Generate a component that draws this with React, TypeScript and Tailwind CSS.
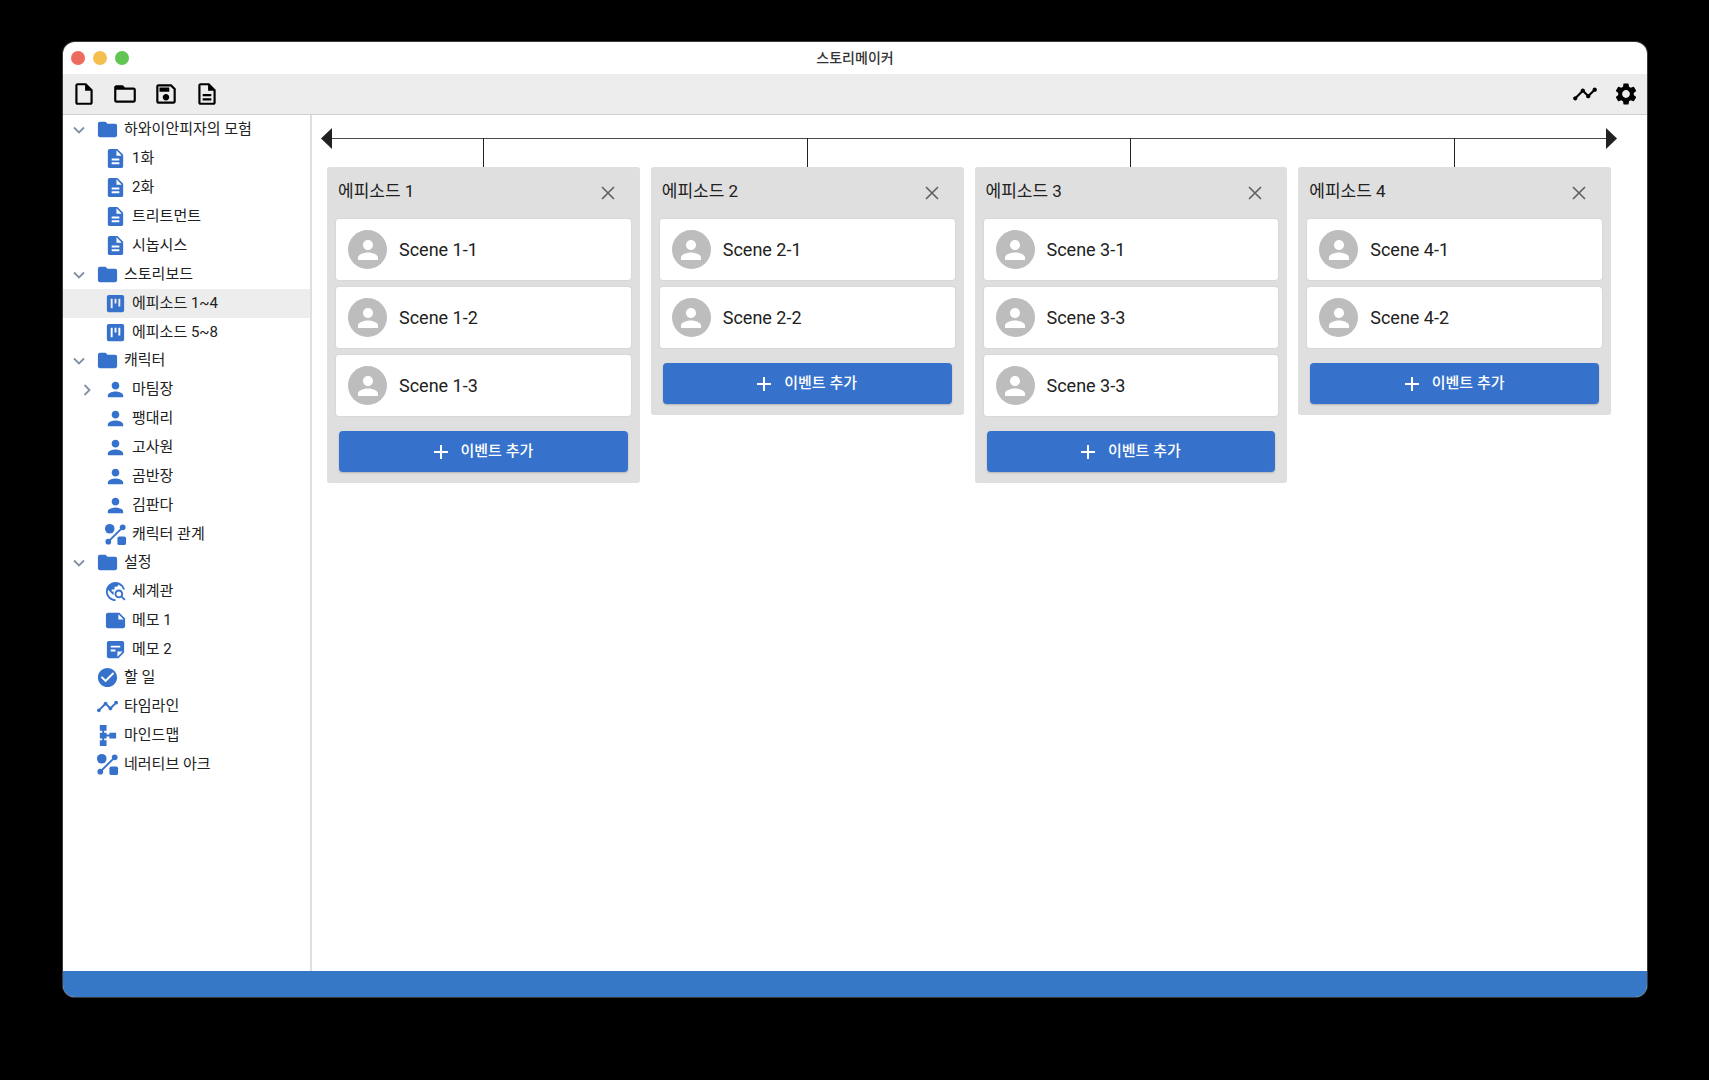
import type { ReactNode } from "react";
import type { IconType } from "react-icons";
import {
  MdCheckCircle,
  MdDescription,
  MdFolder,
  MdFolderOpen,
  MdNote,
  MdOutlineDescription,
  MdOutlineInsertDriveFile,
  MdOutlineSave,
  MdPerson,
  MdSchema,
  MdSettings,
  MdStickyNote2,
  MdTimeline,
  MdTravelExplore,
} from "react-icons/md";

type IconProps = { className?: string };

function BoardIcon({ className }: IconProps) {
  return (
    <svg viewBox="0 0 24 24" className={className} fill="currentColor" aria-hidden>
      <path
        fillRule="evenodd"
        d="M5 3h14a2 2 0 0 1 2 2v14a2 2 0 0 1-2 2H5a2 2 0 0 1-2-2V5a2 2 0 0 1 2-2zm2 4v10h2V7zm4 0v5h2V7zm4 0v8h2V7z"
      />
    </svg>
  );
}

function RelationIcon({ className }: IconProps) {
  return (
    <svg viewBox="0 0 24 24" className={className} fill="currentColor" aria-hidden>
      <circle cx="6" cy="6" r="5" />
      <rect x="14" y="14" width="9" height="9" rx="2" />
      <circle cx="19.500" cy="4.500" r="3" />
      <circle cx="4.500" cy="19.500" r="3" />
      <path d="M4.500 19.500 19.500 4.500" stroke="currentColor" strokeWidth="2" />
    </svg>
  );
}

function Chevron({ open }: { open: boolean }) {
  return (
    <svg
      viewBox="0 0 12 12"
      className="size-3"
      fill="none"
      stroke="currentColor"
      strokeWidth="1.800"
      aria-hidden
    >
      <path d={open ? "M1 3.500 6 8.500 11 3.500" : "M3.500 1 8.500 6 3.500 11"} />
    </svg>
  );
}

type Item = {
  label: string;
  icon: IconType | ((p: IconProps) => ReactNode);
  collapsed?: boolean;
  selected?: boolean;
};

const GROUPS: { label: string; items: Item[] }[] = [
  {
    label: "하와이안피자의 모험",
    items: [
      { label: "1화", icon: MdDescription },
      { label: "2화", icon: MdDescription },
      { label: "트리트먼트", icon: MdDescription },
      { label: "시놉시스", icon: MdDescription },
    ],
  },
  {
    label: "스토리보드",
    items: [
      { label: "에피소드 1~4", icon: BoardIcon, selected: true },
      { label: "에피소드 5~8", icon: BoardIcon },
    ],
  },
  {
    label: "캐릭터",
    items: [
      { label: "마팀장", icon: MdPerson, collapsed: true },
      { label: "팽대리", icon: MdPerson },
      { label: "고사원", icon: MdPerson },
      { label: "곰반장", icon: MdPerson },
      { label: "김판다", icon: MdPerson },
      { label: "캐릭터 관계", icon: RelationIcon },
    ],
  },
  {
    label: "설정",
    items: [
      { label: "세계관", icon: MdTravelExplore },
      { label: "메모 1", icon: MdNote },
      { label: "메모 2", icon: MdStickyNote2 },
    ],
  },
];

const TOOLS: Item[] = [
  { label: "할 일", icon: MdCheckCircle },
  { label: "타임라인", icon: MdTimeline },
  { label: "마인드맵", icon: MdSchema },
  { label: "네러티브 아크", icon: RelationIcon },
];

const EPISODES = [
  { title: "에피소드 1", scenes: ["Scene 1-1", "Scene 1-2", "Scene 1-3"] },
  { title: "에피소드 2", scenes: ["Scene 2-1", "Scene 2-2"] },
  { title: "에피소드 3", scenes: ["Scene 3-1", "Scene 3-3", "Scene 3-3"] },
  { title: "에피소드 4", scenes: ["Scene 4-1", "Scene 4-2"] },
];

const FILE_ACTIONS = [
  { label: "새 파일", icon: MdOutlineInsertDriveFile },
  { label: "열기", icon: MdFolderOpen },
  { label: "저장", icon: MdOutlineSave },
  { label: "내보내기", icon: MdOutlineDescription },
];

const VIEW_ACTIONS = [
  { label: "타임라인", icon: MdTimeline },
  { label: "환경설정", icon: MdSettings },
];

function TitleBar() {
  return (
    <header className="grid h-8 grid-cols-[1fr_auto_1fr] items-center px-2">
      <div className="flex gap-2">
        <button aria-label="닫기" className="size-[14px] rounded-full bg-[#ec6a5e]" />
        <button aria-label="최소화" className="size-[14px] rounded-full bg-[#f4bf4f]" />
        <button aria-label="최대화" className="size-[14px] rounded-full bg-[#61c554]" />
      </div>
      <h1 className="text-sm font-medium text-[#333]">스토리메이커</h1>
    </header>
  );
}

function ToolbarButtons({ actions }: { actions: typeof FILE_ACTIONS }) {
  return (
    <div className="flex gap-[15px]">
      {actions.map((a) => (
        <button key={a.label} aria-label={a.label}>
          <a.icon className="size-[26px]" />
        </button>
      ))}
    </div>
  );
}

function TreeRow({ item, nested }: { item: Item; nested?: boolean }) {
  return (
    <button
      className={`flex h-[29px] w-full items-center text-left ${
        nested ? "pl-[18px]" : "pl-[10px]"
      } ${item.selected ? "bg-[#ededed]" : ""}`}
    >
      <span className="flex w-[23px] text-[#8090a5]">
        {item.collapsed !== undefined && <Chevron open={!item.collapsed} />}
      </span>
      <item.icon className="size-[23px] shrink-0 text-[#3672cc]" />
      <span className="ml-[5px] whitespace-nowrap">{item.label}</span>
    </button>
  );
}

function Sidebar() {
  return (
    <nav className="w-[249px] shrink-0 border-r-2 border-[#dedede] text-[15px] text-[#212121]">
      {GROUPS.map((g) => (
        <div key={g.label} className="not-first:-mb-px">
          <TreeRow item={{ label: g.label, icon: MdFolder, collapsed: false }} />
          {g.items.map((item) => (
            <TreeRow key={item.label} item={item} nested />
          ))}
        </div>
      ))}
      {TOOLS.map((item) => (
        <TreeRow key={item.label} item={item} />
      ))}
    </nav>
  );
}

function TimelineArrow() {
  return (
    <div className="-mx-[6px] flex h-[21px] items-center text-[#212121]">
      <svg viewBox="0 0 11 21" className="h-[21px] w-[11px]" fill="currentColor" aria-hidden>
        <path d="M11 0v21L0 10.500z" />
      </svg>
      <div className="h-px flex-1 bg-[#4a4a4a]" />
      <svg viewBox="0 0 11 21" className="h-[21px] w-[11px]" fill="currentColor" aria-hidden>
        <path d="M0 0v21l11-10.500z" />
      </svg>
    </div>
  );
}

function EpisodeColumn({ title, scenes }: { title: string; scenes: string[] }) {
  return (
    <div className="min-w-0 flex-1">
      <div className="-mt-[11px] mx-auto h-[29px] w-px bg-[#212121]" />
      <section className="rounded-[3px] bg-[#dfdfdf] px-[9px] pb-[11px]">
        <div className="flex h-[52px] items-center justify-between pl-[2px] pr-4 pb-[2px]">
          <h2 className="text-[17px] text-[#212121]">{title}</h2>
          <button aria-label={`${title} 삭제`} className="pt-[2px] text-[#5f5f5f]">
            <svg
              viewBox="0 0 14 14"
              className="size-[14px]"
              fill="none"
              stroke="currentColor"
              strokeWidth="1.600"
              aria-hidden
            >
              <path d="M1 1l12 12M13 1L1 13" />
            </svg>
          </button>
        </div>
        <ul className="flex flex-col gap-[7px]">
          {scenes.map((s, i) => (
            <li
              key={i}
              className="flex h-[61px] items-center gap-3 rounded-[3px] bg-white px-3 shadow-[0_0_2px_rgba(0,0,0,0.12)]"
            >
              <span className="flex size-[39px] items-center justify-center rounded-full bg-[#bdbdbd]">
                <MdPerson className="size-[30px] text-white" />
              </span>
              <span className="text-lg text-[#212121]">{s}</span>
            </li>
          ))}
        </ul>
        <div className="mt-[15px] px-[3px]">
          <button className="flex h-[41px] w-full items-center justify-center gap-[13px] rounded bg-[#3672cc] text-[15px] font-medium text-white shadow-[0_1px_2px_rgba(0,0,0,0.2)]">
            <svg
              viewBox="0 0 14 14"
              className="size-[14px]"
              stroke="currentColor"
              strokeWidth="2"
              aria-hidden
            >
              <path d="M7 0v14M0 7h14" />
            </svg>
            이벤트 추가
          </button>
        </div>
      </section>
    </div>
  );
}

export default function App() {
  return (
    <div className="flex h-screen bg-black pt-[42px] pr-[62px] pb-[83px] pl-[63px] font-[Roboto,'Noto_Sans_CJK_KR',sans-serif]">
      <div className="flex min-w-0 flex-1 flex-col overflow-hidden rounded-xl bg-white ring-1 ring-[#3a3a3a]">
        <TitleBar />
        <div className="flex h-[41px] items-center justify-between border-b border-[#cfcfcf] bg-[#ededed] px-2">
          <ToolbarButtons actions={FILE_ACTIONS} />
          <ToolbarButtons actions={VIEW_ACTIONS} />
        </div>
        <div className="flex min-h-0 flex-1">
          <Sidebar />
          <main className="min-w-0 flex-1 pt-[13px] pr-9 pl-[15px]">
            <TimelineArrow />
            <div className="flex items-start gap-[11px]">
              {EPISODES.map((e) => (
                <EpisodeColumn key={e.title} {...e} />
              ))}
            </div>
          </main>
        </div>
        <footer className="h-[26px] bg-[#3678c6]" />
      </div>
    </div>
  );
}
